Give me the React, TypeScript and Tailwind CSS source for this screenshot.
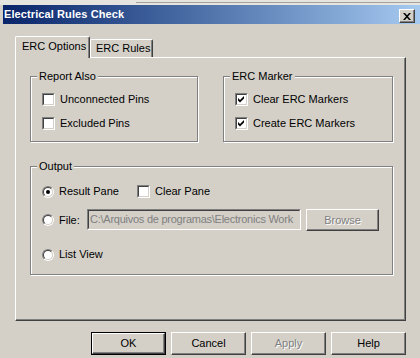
import React from 'react'

const raised =
  'border border-t-white border-l-white border-r-[#404040] border-b-[#404040] shadow-[inset_-1px_-1px_0_#808080]'

function Checkbox({ checked }: { checked?: boolean }) {
  return (
    <span className="block w-[13px] h-[13px] shrink-0 border border-t-[#808080] border-l-[#808080] border-r-white border-b-white">
      <span className="flex w-full h-full items-center justify-center bg-white border border-t-[#404040] border-l-[#404040] border-r-[#d4d0c8] border-b-[#d4d0c8]">
        {checked && (
          <svg width="7" height="7" viewBox="0 0 7 7">
            <path d="M0 2L2 4L6 0V2.6L2 6.6L0 4.6Z" fill="#000" />
          </svg>
        )}
      </span>
    </span>
  )
}

function Radio({ checked }: { checked?: boolean }) {
  return (
    <span className="block w-[12px] h-[12px] shrink-0 rounded-full border border-t-[#808080] border-l-[#808080] border-r-white border-b-white">
      <span className="flex w-full h-full items-center justify-center rounded-full bg-white border border-t-[#404040] border-l-[#404040] border-r-[#d4d0c8] border-b-[#d4d0c8]">
        {checked && <span className="block w-[4px] h-[4px] rounded-full bg-black" />}
      </span>
    </span>
  )
}

function Row({ children, checked }: { children: React.ReactNode; checked?: boolean }) {
  return (
    <div className="flex items-center gap-[5px] h-[13px]">
      <Checkbox checked={checked} />
      <span className="leading-[13px]">{children}</span>
    </div>
  )
}

function Group({ title, className, children }: { title: string; className?: string; children: React.ReactNode }) {
  return (
    <fieldset
      className={`border border-[#808080] shadow-[inset_1px_1px_0_#fff,1px_1px_0_#fff] ${className ?? ''}`}
    >
      <legend className="ml-[6px] px-[2px] leading-[13px] bg-[#d4d0c8]">{title}</legend>
      {children}
    </fieldset>
  )
}

function Button({
  children,
  disabled,
  isDefault,
}: {
  children: React.ReactNode
  disabled?: boolean
  isDefault?: boolean
}) {
  const label = (
    <span
      className={
        disabled ? 'text-[#808080] [text-shadow:1px_1px_0_#fff]' : 'text-black'
      }
    >
      {children}
    </span>
  )
  if (isDefault) {
    return (
      <div className="w-[75px] h-[23px] border border-black">
        <div className={`w-full h-full flex items-center justify-center ${raised}`}>{label}</div>
      </div>
    )
  }
  return (
    <div className={`w-[75px] h-[23px] flex items-center justify-center ${raised}`}>{label}</div>
  )
}

export default function App() {
  return (
    <div className="w-[420px] h-[358px] overflow-hidden bg-[#d4d0c8] text-[11px] leading-[13px] text-black font-['Liberation_Sans',Arial,sans-serif]">
      {/* strip of the window behind */}
      <div className="h-[5px] bg-[#e6e4de] pt-[2px] pl-[136px]">
        <div className="h-px bg-[#a4a29c]" />
      </div>

      {/* title bar */}
      <div className="ml-[3px] h-[19px] flex items-start justify-between pr-[5px] bg-gradient-to-r from-[#0a246a] to-[#a6caf0]">
        <span className="pl-[1px] pt-[3px] font-bold text-white leading-[13px] tracking-[0.1px]">
          Electrical Rules Check
        </span>
        <div className={`mt-[4px] w-[16px] h-[14px] flex items-center justify-center bg-[#d4d0c8] ${raised}`}>
          <svg width="8" height="7" viewBox="0 0 8 7">
            <path d="M0 0H2L4 2.3L6 0H8L5 3.5L8 7H6L4 4.7L2 7H0L3 3.5Z" fill="#000" />
          </svg>
        </div>
      </div>

      <div className="pt-[12px] pl-[15px] pr-[14px]">
        {/* tabs */}
        <div className="flex items-end h-[21px]">
          <div className="relative z-10 -mb-px w-[75px] h-[22px] pl-[6px] pt-[3px] bg-[#d4d0c8] rounded-t-[2px] border-t border-l border-r border-t-white border-l-white border-r-[#404040] shadow-[inset_-1px_0_0_#808080]">
            ERC Options
          </div>
          <div className="w-[63px] h-[18px] pl-[5px] pt-[2px] rounded-t-[2px] border-t border-l border-r border-t-white border-l-white border-r-[#404040] shadow-[inset_-1px_0_0_#808080]">
            ERC Rules
          </div>
        </div>

        {/* tab panel */}
        <div className={`h-[264px] pl-[14px] pr-[12px] pt-[12px] ${raised}`}>
          <div className="flex justify-between">
            <Group title="Report Also" className="w-[168px]">
              <div className="flex flex-col gap-[11px] pt-[10px] pb-[11px] pl-[11px]">
                <Row>Unconnected Pins</Row>
                <Row>Excluded Pins</Row>
              </div>
            </Group>
            <Group title="ERC Marker" className="w-[170px]">
              <div className="flex flex-col gap-[11px] pt-[10px] pb-[11px] pl-[11px]">
                <Row checked>Clear ERC Markers</Row>
                <Row checked>Create ERC Markers</Row>
              </div>
            </Group>
          </div>

          <Group title="Output" className="mt-[18px] w-full">
            <div className="flex flex-col pt-[12px] pb-[13px] pl-[11px]">
              <div className="flex items-center h-[13px]">
                <div className="flex items-center gap-[5px] w-[95px]">
                  <Radio checked />
                  <span>Result Pane</span>
                </div>
                <Row>Clear Pane</Row>
              </div>

              <div className="flex items-center h-[22px] mt-[11px]">
                <div className="flex items-center gap-[5px] w-[45px]">
                  <Radio />
                  <span>File:</span>
                </div>
                <div className="self-start w-[214px] h-[21px] border border-t-[#808080] border-l-[#808080] border-r-white border-b-white">
                  <div className="w-full h-full flex items-center pl-[1px] overflow-hidden whitespace-nowrap text-[#808080] tracking-[-0.25px] border border-t-[#404040] border-l-[#404040] border-r-[#d4d0c8] border-b-[#d4d0c8]">
                    C:\Arquivos de programas\Electronics Work
                  </div>
                </div>
                <div className={`ml-[5px] w-[73px] h-[22px] flex items-center justify-center ${raised}`}>
                  <span className="text-[#808080] [text-shadow:1px_1px_0_#fff]">Browse</span>
                </div>
              </div>

              <div className="flex items-center gap-[5px] h-[13px] mt-[17px]">
                <Radio />
                <span>List View</span>
              </div>
            </div>
          </Group>
        </div>

        {/* dialog buttons */}
        <div className="flex justify-end gap-[5px] mt-[11px]">
          <Button isDefault>OK</Button>
          <Button>Cancel</Button>
          <Button disabled>Apply</Button>
          <Button>Help</Button>
        </div>
      </div>
    </div>
  )
}
